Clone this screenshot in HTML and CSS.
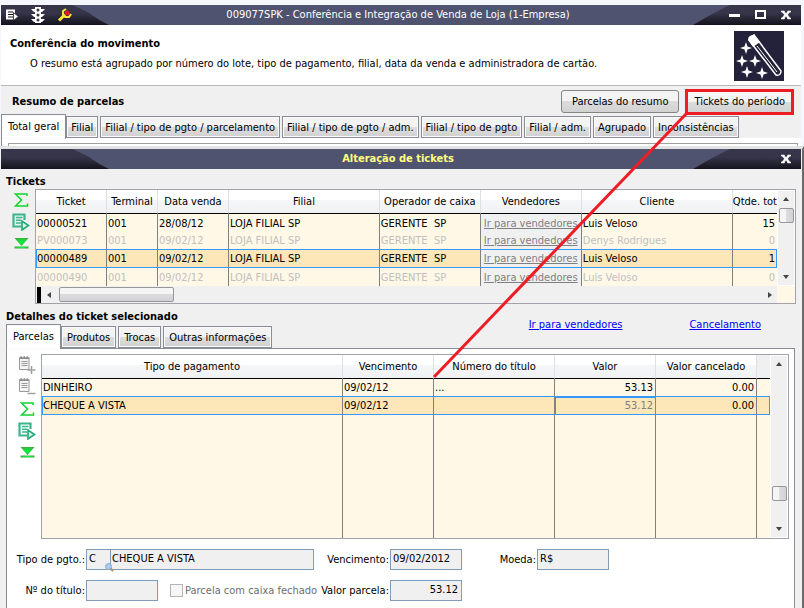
FILE: index.html
```html
<!DOCTYPE html>
<html lang="pt-BR">

<head>
    <meta charset="UTF-8" />
    <meta name="viewport" content="width=device-width, initial-scale=1.0" />
    <title>009077SPK - Conferência e Integração de Venda de Loja</title>
    <link rel="stylesheet" href="styles.css">
</head>

<body>

    <!-- Icons shared by both toolbars -->
    <svg class="sprite" width="0" height="0" aria-hidden="true">
        <defs>
            <radialGradient id="down-green" cx="50%" cy="50%" r="60%">
                <stop offset="0" stop-color="#00f83c" />
                <stop offset="1" stop-color="#42a83a" />
            </radialGradient>
        </defs>
        <symbol id="i-sum" viewBox="0 0 18 18">
            <path d="M15 5V3H3.500l6 6-6 6H15.500v-2.500" fill="none" stroke="#10d42c" stroke-width="1.500" />
        </symbol>
        <symbol id="i-run" viewBox="0 0 18 18">
            <path d="M12.500 7V1.500H1.500v12h8" fill="none" stroke="#3cb48c" stroke-width="2.200" />
            <path d="M4 4.500h6.500M4 7.200h5M4 10h5" stroke="#3cb48c" stroke-width="1.500" />
            <path d="M10 8v9l6.500-4.500z" fill="#d8f4e6" stroke="#24a878" stroke-width="1.600" />
        </symbol>
        <symbol id="i-down" viewBox="0 0 18 18">
            <path d="M2.500 3h14L9.500 11z" fill="url(#down-green)" />
            <path d="M2.500 11.500h14v2h-14z" fill="url(#down-green)" />
        </symbol>
        <symbol id="i-list" viewBox="0 0 18 18">
            <path d="M1.500 2.500h9.500v11h-9.500z" fill="#f4f4f4" stroke="#9a9a9a" />
            <path d="M1 2h10.500M2.500 1h1.500M5.500 1h1.500M8.500 1h1.500" stroke="#8c8c8c" stroke-width="1.500" />
            <path d="M3.500 5.500h6M3.500 7.500h6M3.500 9.500h6" stroke="#9a9a9a" />
        </symbol>
        <symbol id="i-close" viewBox="0 0 10 10">
            <path d="M0 1h3.500v1L5 3.500 6.500 2V1H10v1H9L6.500 4.800 9 8h1v1H6.500V8L5 6.300 3.500 8v1H0V8h1l2.500-3.200L1 2H0z" fill="#fff" stroke="#fff" stroke-width=".5" />
        </symbol>
    </svg>

    <!-- Main window -->
    <section class="window main-window">
        <header class="titlebar">
            <div class="titlebar-icons">
                <svg width="14" height="14" viewBox="0 0 14 14">
                    <path d="M1 1.500h9v10H1z" fill="#fff" />
                    <path d="M3 4h5M3 6.500h5M3 9h5" stroke="#17161f" />
                    <path d="M8.500 4.500l5 4-5 4z" fill="#fff" stroke="#17161f" stroke-width=".8" />
                </svg>
                <svg width="16" height="18" viewBox="0 0 16 18">
                    <path d="M5 1h6v16H5z" fill="#fff" />
                    <path d="M1 3h14l-3 3H4zM1 8h14l-3 3H4zM1 13h14l-3 3H4z" fill="#fff" />
                    <circle cx="8" cy="4" r="1.500" fill="#383744" />
                    <circle cx="8" cy="9" r="1.500" fill="#383744" />
                    <circle cx="8" cy="14" r="1.500" fill="#383744" />
                </svg>
                <svg width="16" height="16" viewBox="0 0 16 16">
                    <path d="M2 13.500l6-6" stroke="#f8e43c" stroke-width="3" />
                    <path d="M9 2L6 4v4l2 2h4l2-3" fill="none" stroke="#f8e43c" stroke-width="2" />
                    <circle cx="10" cy="6" r="2.500" fill="#e81818" />
                </svg>
            </div>
            <h1>009077SPK - Conferência e Integração de Venda de Loja (1-Empresa)</h1>
            <div class="titlebar-buttons">
                <button type="button" aria-label="Minimizar"><svg width="12" height="10" viewBox="0 0 12 10"><path d="M0 4h11v3H0z" fill="#fff" /></svg></button>
                <button type="button" aria-label="Maximizar"><svg width="12" height="10" viewBox="0 0 12 10"><path d="M1 1h9v7H1z" fill="none" stroke="#fff" stroke-width="2" /></svg></button>
                <button type="button" aria-label="Fechar"><svg width="10" height="10"><use href="#i-close" /></svg></button>
            </div>
        </header>

        <div class="intro">
            <div>
                <h2>Conferência do movimento</h2>
                <p>O resumo está agrupado por número do lote, tipo de pagamento, filial, data da venda e administradora de cartão.</p>
            </div>
            <svg class="wand" width="50" height="50" viewBox="0 0 50 50">
                <path d="M0 0h50v50H0z" fill="#24223a" />
                <path d="M15 9l5-5 27 36q0 5-5 4z" fill="#24223a" stroke="#fff" stroke-width="1.500" />
                <path d="M14 9q0-5 6-5l6 7-7 5z" fill="#fff" />
                <path d="M23 15l20 26" stroke="#fff" />
                <g fill="#fff">
                    <path id="star" d="M12 11l1.500 4.500L18 17l-4.500 1.500L12 23l-1.500-4.500L6 17l4.500-1.500z" />
                    <use href="#star" x="-4" y="13" />
                    <use href="#star" x="9" y="13" />
                    <use href="#star" x="1" y="24" />
                    <use href="#star" x="16" y="25" />
                </g>
            </svg>
        </div>

        <div class="summary">
            <h2>Resumo de parcelas</h2>
            <button type="button" class="btn">Parcelas do resumo</button>
            <button type="button" class="btn btn-marked">Tickets do período</button>
        </div>

        <nav class="tabs" role="tablist">
            <button type="button" role="tab" class="tab active" aria-selected="true">Total geral</button>
            <button type="button" role="tab" class="tab">Filial</button>
            <button type="button" role="tab" class="tab">Filial / tipo de pgto / parcelamento</button>
            <button type="button" role="tab" class="tab">Filial / tipo de pgto / adm.</button>
            <button type="button" role="tab" class="tab">Filial / tipo de pgto</button>
            <button type="button" role="tab" class="tab">Filial / adm.</button>
            <button type="button" role="tab" class="tab">Agrupado</button>
            <button type="button" role="tab" class="tab">Inconsistências</button>
        </nav>
        <div class="summary-page">
            <div class="summary-grid"></div>
        </div>
    </section>

    <!-- Tickets window -->
    <section class="window tickets-window">
        <header class="titlebar">
            <h1 class="yellow">Alteração de tickets</h1>
            <div class="titlebar-buttons">
                <button type="button" aria-label="Fechar"><svg width="10" height="10"><use href="#i-close" /></svg></button>
            </div>
        </header>

        <h2 class="block-title">Tickets</h2>
        <div class="block">
            <div class="toolbar">
                <button type="button" aria-label="Somar"><svg width="18" height="18"><use href="#i-sum" /></svg></button>
                <button type="button" aria-label="Executar"><svg width="18" height="18"><use href="#i-run" /></svg></button>
                <button type="button" aria-label="Último"><svg width="18" height="18"><use href="#i-down" /></svg></button>
            </div>
            <div class="grid">
                <div class="grid-body">
                    <table class="tickets">
                        <colgroup>
                            <col class="w70"><col class="w50"><col class="w70"><col><col class="w100"><col class="w100"><col class="w150"><col class="w44">
                        </colgroup>
                        <thead>
                            <tr>
                                <th>Ticket</th>
                                <th>Terminal</th>
                                <th>Data venda</th>
                                <th>Filial</th>
                                <th>Operador de caixa</th>
                                <th>Vendedores</th>
                                <th>Cliente</th>
                                <th>Qtde. tot</th>
                            </tr>
                        </thead>
                        <tbody>
                            <tr>
                                <td>00000521</td>
                                <td>001</td>
                                <td>28/08/12</td>
                                <td>LOJA FILIAL SP</td>
                                <td>GERENTE&nbsp; SP</td>
                                <td class="link-cell"><a href="#">Ir para vendedores</a></td>
                                <td>Luis Veloso</td>
                                <td class="num">15</td>
                            </tr>
                            <tr class="off">
                                <td>PV000073</td>
                                <td>001</td>
                                <td>09/02/12</td>
                                <td>LOJA FILIAL SP</td>
                                <td>GERENTE&nbsp; SP</td>
                                <td class="link-cell"><a href="#">Ir para vendedores</a></td>
                                <td>Denys Rodrigues</td>
                                <td class="num">0</td>
                            </tr>
                            <tr class="selected">
                                <td>00000489</td>
                                <td>001</td>
                                <td>09/02/12</td>
                                <td>LOJA FILIAL SP</td>
                                <td>GERENTE&nbsp; SP</td>
                                <td class="link-cell"><a href="#">Ir para vendedores</a></td>
                                <td>Luis Veloso</td>
                                <td class="num">1</td>
                            </tr>
                            <tr class="off">
                                <td>00000490</td>
                                <td>001</td>
                                <td>09/02/12</td>
                                <td>LOJA FILIAL SP</td>
                                <td>GERENTE&nbsp; SP</td>
                                <td class="link-cell"><a href="#">Ir para vendedores</a></td>
                                <td>Luis Veloso</td>
                                <td class="num">0</td>
                            </tr>
                        </tbody>
                    </table>
                    <div class="vscroll">
                        <span class="arrow up"></span>
                        <span class="thumb"></span>
                        <span class="arrow down"></span>
                    </div>
                </div>
                <div class="grid-foot">
                    <div class="hscroll">
                        <span class="split"></span>
                        <span class="arrow left"></span>
                        <span class="thumb"></span>
                        <span class="arrow right"></span>
                    </div>
                </div>
            </div>
        </div>

        <div class="details-head">
            <div>
                <h2 class="block-title">Detalhes do ticket selecionado</h2>
                <nav class="tabs" role="tablist">
                    <button type="button" role="tab" class="tab active" aria-selected="true">Parcelas</button>
                    <button type="button" role="tab" class="tab">Produtos</button>
                    <button type="button" role="tab" class="tab">Trocas</button>
                    <button type="button" role="tab" class="tab">Outras informações</button>
                </nav>
            </div>
            <div class="links">
                <a href="#">Ir para vendedores</a>
                <a href="#">Cancelamento</a>
            </div>
        </div>

        <div class="details-page">
            <div class="block">
                <div class="toolbar">
                    <button type="button" aria-label="Incluir">
                        <svg width="18" height="18" viewBox="0 0 18 18"><use href="#i-list" /><path d="M13.500 10v8M9.500 14h8" stroke="#a0a0a0" stroke-width="1.500" /></svg>
                    </button>
                    <button type="button" aria-label="Excluir">
                        <svg width="18" height="18" viewBox="0 0 18 18"><use href="#i-list" /><path d="M9.500 15.500h8" stroke="#a0a0a0" stroke-width="1.500" /></svg>
                    </button>
                    <button type="button" aria-label="Somar"><svg width="18" height="18"><use href="#i-sum" /></svg></button>
                    <button type="button" aria-label="Executar"><svg width="18" height="18"><use href="#i-run" /></svg></button>
                    <button type="button" aria-label="Último"><svg width="18" height="18"><use href="#i-down" /></svg></button>
                </div>
                <div class="grid">
                    <div class="grid-body">
                        <table class="parcels">
                            <colgroup>
                                <col><col class="w90"><col class="w120"><col class="w100"><col class="w100"><col class="w13">
                            </colgroup>
                            <thead>
                                <tr>
                                    <th>Tipo de pagamento</th>
                                    <th>Vencimento</th>
                                    <th>Número do título</th>
                                    <th>Valor</th>
                                    <th>Valor cancelado</th>
                                    <th class="blank"></th>
                                </tr>
                            </thead>
                            <tbody>
                                <tr>
                                    <td>DINHEIRO</td>
                                    <td>09/02/12</td>
                                    <td>...</td>
                                    <td class="num">53.13</td>
                                    <td class="num">0.00</td>
                                    <td></td>
                                </tr>
                                <tr class="selected">
                                    <td>CHEQUE A VISTA</td>
                                    <td>09/02/12</td>
                                    <td></td>
                                    <td class="num focus">53.12</td>
                                    <td class="num">0.00</td>
                                    <td></td>
                                </tr>
                                <tr class="filler">
                                    <td></td><td></td><td></td><td></td><td></td><td></td>
                                </tr>
                            </tbody>
                        </table>
                        <div class="vscroll">
                            <span class="arrow up"></span>
                            <span class="thumb low"></span>
                            <span class="arrow down"></span>
                        </div>
                    </div>
                </div>
            </div>

            <form class="form">
                <label for="tipo">Tipo de pgto.:</label>
                <div class="pair">
                    <div class="lookup">
                        <input id="tipo" type="text" value="C" readonly>
                        <svg class="lens" width="9" height="9" viewBox="0 0 9 9">
                            <path d="M5 5l3 3" stroke="#b48c50" stroke-width="2" />
                            <circle cx="3.500" cy="3.500" r="3" fill="#a8ccf4" stroke="#88a8d0" />
                        </svg>
                    </div>
                    <input class="desc" type="text" value="CHEQUE A VISTA" aria-label="Descrição" readonly>
                </div>
                <label for="venc">Vencimento:</label>
                <input id="venc" type="text" value="09/02/2012" readonly>
                <label for="moeda">Moeda:</label>
                <input id="moeda" type="text" value="R$" readonly>

                <label for="titulo">Nº do título:</label>
                <div class="pair">
                    <input id="titulo" type="text" value="" readonly>
                    <label class="check"><input type="checkbox" disabled>Parcela com caixa fechado</label>
                </div>
                <label for="valor">Valor parcela:</label>
                <input id="valor" class="num" type="text" value="53.12" readonly>
            </form>
        </div>
    </section>

    <!-- Callout from the button to the tickets window -->
    <svg class="callout" width="804" height="608" viewBox="0 0 804 608" aria-hidden="true">
        <path d="M686 114L434 377" stroke="#ee1c25" stroke-width="3" />
    </svg>

</body>

</html>
```
FILE: styles.css
```css
* {
    box-sizing: border-box;
    margin: 0;
    padding: 0;
}

body {
    display: flex;
    flex-direction: column;
    min-height: 100vh;
    padding-top: 5px;
    background: #f4f8fd;
    color: #000;
    font-family: "DejaVu Sans Condensed", Tahoma, sans-serif;
    font-size: 11px;
    line-height: 16px;
}

button,
input {
    font: inherit;
    color: inherit;
}

h1,
h2 {
    font-size: 11px;
}

.sprite {
    position: absolute;
}

.window {
    background: #f0f0f0;
}

.main-window {
    margin: 0 3px 0 1px;
}

/* Title bars */

.titlebar {
    position: relative;
    z-index: 0;
    display: grid;
    grid-template-columns: 80px 1fr 80px;
    align-items: center;
    height: 20px;
    padding: 0 10px 0 4px;
    background: #50536f;
    color: #fff;
}

.titlebar::before,
.titlebar::after {
    content: "";
    position: absolute;
    top: 0;
    bottom: 0;
    z-index: -1;
    width: 108px;
    background: linear-gradient(#36354a 40%, #14131c);
}

.titlebar::before {
    left: 0;
    clip-path: polygon(0 0, 66% 0, 80% 35%, 91% 75%, 100% 100%, 0 100%);
}

.titlebar::after {
    right: 0;
    clip-path: polygon(34% 0, 100% 0, 100% 100%, 0 100%, 16% 50%);
}

.titlebar h1 {
    grid-column: 2;
    font-weight: normal;
    text-align: center;
}

.titlebar h1.yellow {
    color: #ffff80;
    font-weight: bold;
}

.titlebar-icons,
.titlebar-buttons {
    display: flex;
    align-items: center;
}

.titlebar-icons {
    gap: 11px;
}

.titlebar-buttons {
    justify-content: flex-end;
    gap: 14px;
}

.titlebar button,
.toolbar button {
    display: block;
    border: none;
    background: none;
}

.titlebar svg,
.toolbar svg {
    display: block;
}

/* Main window */

.intro {
    display: flex;
    justify-content: space-between;
    height: 61px;
    padding: 6px 17px 0 9px;
    background: #fff;
    border-bottom: 1px solid #b8b8b8;
}

.intro h2 {
    padding-top: 5px;
}

.intro p {
    padding: 4px 0 0 20px;
}

.summary {
    display: flex;
    align-items: center;
    gap: 6px;
    height: 28px;
    padding: 3px 7px 0 11px;
}

.summary h2 {
    flex: 1;
}

.btn {
    height: 23px;
    padding: 0 10px;
    border: 1px solid #848484;
    border-radius: 3px;
    background: linear-gradient(#f4f4f4 50%, #dcdcdc 50%, #d2d2d2);
    white-space: nowrap;
}

.btn-marked {
    height: 26px;
    padding: 0 6px;
    border: 3px solid #ee1c25;
    border-radius: 0;
}

.tabs {
    display: flex;
    align-items: flex-end;
    gap: 2px;
    height: 24px;
}

.tab {
    height: 22px;
    padding: 1px 4px 0;
    border: 1px solid #898c95;
    background: linear-gradient(#f3f3f3 50%, #dedede 50%, #d0d0d0);
    box-shadow: inset 0 0 0 1px #fafafa;
    white-space: nowrap;
}

.tab.active {
    position: relative;
    z-index: 1;
    height: 25px;
    margin: 0 -2px -1px 0;
    padding: 0 6px;
    border-bottom: none;
    background: #fff;
}

.summary-page {
    height: 8px;
    padding: 5px 3px 0 6px;
    background: #fff;
    border-left: 1px solid #898c95;
}

.summary-grid {
    height: 3px;
    border: 1px solid #a0a0a0;
    border-bottom: none;
}

/* Tickets window */

.tickets-window {
    display: flex;
    flex: 1;
    flex-direction: column;
    padding-left: 1px;
    border-top: 3px solid #e3e3e3;
    border-right: 2px solid #696969;
}

.tickets-window .titlebar {
    margin-right: 1px;
}

.block-title {
    height: 20px;
    padding: 5px 0 0 5px;
    line-height: 15px;
}

.block {
    display: flex;
    align-items: stretch;
    padding: 0 6px 0 11px;
}

.toolbar {
    display: flex;
    flex-direction: column;
    flex: none;
    gap: 4px;
    width: 23px;
    padding-top: 2px;
}

.grid {
    flex: 1;
    min-width: 0;
    border: 1px solid #a0a4aa;
    background: #fff8e7;
}

.grid-body {
    display: flex;
}

table {
    flex: 1;
    min-width: 0;
    table-layout: fixed;
    border-spacing: 0;
}

.w13 { width: 13px; }
.w44 { width: 44px; }
.w50 { width: 51px; }
.w70 { width: 71px; }
.w90 { width: 91px; }
.w100 { width: 101px; }
.w120 { width: 121px; }
.w150 { width: 151px; }

th {
    height: 24px;
    padding-top: 1px;
    border-right: 1px solid #dfe0e3;
    border-bottom: 1px solid #000;
    background: linear-gradient(#fff 45%, #f4f6f8 45%, #eff1f3);
    font-weight: normal;
    white-space: nowrap;
}

th.blank {
    background: #f0f0f0;
}

td {
    height: 18px;
    padding: 1px 1px 0;
    border-right: 1px solid #808080;
    line-height: 16px;
    white-space: nowrap;
    overflow: hidden;
}

th:last-child,
td:last-child {
    border-right: none;
}

.num {
    padding-right: 2px;
    text-align: right;
}

.off td {
    color: #c0c0c0;
}

.selected td {
    background: #fde6b8;
}

.selected td,
tr:has(+ .selected) td {
    border-bottom: 1px solid #3399ff;
}

.selected td:first-child {
    box-shadow: inset 1px 0 #3399ff;
}

.selected td:last-child {
    box-shadow: inset -1px 0 #3399ff;
}

.selected td.focus {
    border-right-color: #3399ff;
    box-shadow: inset 1px 1px #3399ff;
    color: #808080;
}

tbody .link-cell {
    padding-left: 3px;
    background: #f0f0f0;
}

.selected .link-cell {
    background: #f0f0f0;
}

.link-cell a {
    color: #808080;
}

.parcels {
    height: 183px;
}

.filler td {
    height: auto;
}

/* Scroll bars */

.vscroll {
    display: flex;
    flex: none;
    flex-direction: column;
    align-items: center;
    width: 18px;
    padding: 6px 0;
    background: #f0f0f0;
    border: 1px solid #fff;
}

.arrow {
    border: 3px solid transparent;
}

.arrow.up {
    border-top: none;
    border-bottom: 4px solid #444;
}

.arrow.down {
    margin-top: auto;
    border-bottom: none;
    border-top: 4px solid #444;
}

.arrow.left {
    border-left: none;
    border-right: 4px solid #444;
}

.arrow.right {
    margin-left: auto;
    border-right: none;
    border-left: 4px solid #444;
}

.thumb {
    width: 15px;
    height: 15px;
    border: 1px solid #979797;
    border-radius: 2px;
    background: linear-gradient(to right, #f5f5f5 45%, #dcdcdf 50%, #d2d2d6);
}

.vscroll .thumb {
    margin-top: 7px;
}

.vscroll .thumb.low {
    margin-top: auto;
}

.vscroll .thumb.low + .down {
    margin-top: 26px;
}

.grid-foot {
    padding-right: 18px;
}

.hscroll {
    display: flex;
    align-items: center;
    height: 17px;
    padding-right: 5px;
    background: #f0f0f0;
}

.split {
    width: 4px;
    height: 16px;
    margin: 0 6px 0 1px;
    background: #000;
}

.hscroll .thumb {
    width: 115px;
    margin-left: 8px;
    background: linear-gradient(#f5f5f5 45%, #dcdcdf 50%, #d2d2d6);
}

/* Ticket details */

.details-head {
    display: flex;
    justify-content: space-between;
}

.details-head .tabs {
    padding-left: 5px;
}

.details-head .tab {
    padding: 1px 5px 0;
}

.details-head .tab.active {
    padding: 0 6px;
}

.links {
    display: flex;
    gap: 67px;
    padding: 13px 41px 0 0;
}

.links a {
    color: #0000ff;
}

.details-page {
    flex: 1;
    margin: 0 7px 0 5px;
    padding-top: 5px;
    background: #fff;
    border: 1px solid #898c95;
    border-bottom: none;
}

.details-page .block {
    padding: 0 5px 0 11px;
}

.form {
    display: grid;
    grid-template-columns: 78px 228px 74px 72px 73px 72px;
    gap: 10px 1px;
    align-items: center;
    padding: 10px 0 7px;
}

.form > label {
    text-align: right;
    white-space: nowrap;
}

.form input[type="text"] {
    width: 72px;
    height: 21px;
    padding: 0 2px 2px;
    border: 1px solid #7f9db9;
    background: #f0f0f0;
}

.form input.num {
    padding-right: 3px;
}

.pair {
    display: flex;
    align-items: center;
}

.lookup {
    position: relative;
    flex: none;
}

.form .lookup input {
    display: block;
    width: 25px;
}

.form .pair .desc {
    flex: 1;
    min-width: 0;
    margin-left: -1px;
    padding-left: 1px;
}

.lens {
    position: absolute;
    right: -3px;
    bottom: -2px;
    z-index: 1;
}

.check {
    display: flex;
    align-items: center;
    gap: 2px;
    margin-left: 12px;
    color: #6d6d6d;
    white-space: nowrap;
}

.check input {
    appearance: none;
    width: 13px;
    height: 13px;
    border: 1px solid #b4b4b4;
    background: #f6f6f6;
}

.callout {
    position: absolute;
    top: 0;
    left: 0;
    pointer-events: none;
}
```
